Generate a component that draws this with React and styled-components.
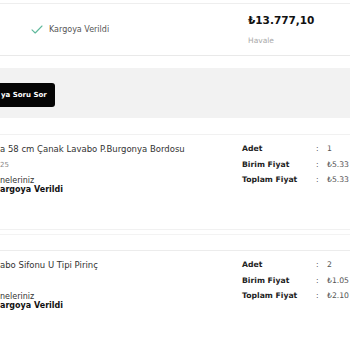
import React from 'react';
import styled, { createGlobalStyle } from 'styled-components';

const GlobalStyle = createGlobalStyle`
  html, body {
    margin: 0;
    padding: 0;
    background: #ffffff;
  }
  body {
    font-family: "DejaVu Sans", "Noto Sans", sans-serif;
    color: #222;
  }
`;

const Page = styled.div`
  width: 350px;
  height: 350px;
  overflow: hidden;
  background: #fff;
`;

const Summary = styled.div`
  margin-top: 3px;
  height: 51px;
  border-top: 1px solid #eeeeee;
  border-bottom: 1px solid #e9e9e9;
  display: grid;
  grid-template-columns: 248px 1fr;
  align-items: center;
`;

const Status = styled.div`
  display: flex;
  align-items: center;
  gap: 6px;
  padding-left: 31px;
  font-size: 8px;
  color: #555;
`;

const PriceBox = styled.div`
  display: flex;
  flex-direction: column;
  gap: 11px;
`;

const Price = styled.div`
  font-size: 10.5px;
  font-weight: 700;
  color: #111;
  line-height: 12px;
`;

const Method = styled.div`
  font-size: 7.5px;
  color: #aaa;
  line-height: 8px;
`;

const ActionBar = styled.div`
  margin-top: 12px;
  height: 50px;
  background: #f2f2f2;
  display: flex;
  align-items: center;
`;

const AskButton = styled.button`
  height: 24px;
  padding: 0 8px 0 1px;
  border: none;
  border-radius: 0 3px 3px 0;
  background: #050505;
  color: #fff;
  font-family: inherit;
  font-size: 7px;
  font-weight: 600;
  margin-top: 3px;
`;

const Item = styled.div`
  border-top: 1px solid ${p => (p.strong ? '#ececec' : '#f1f1f1')};
  margin-top: ${p => p.gap}px;
  padding: 10px 0 ${p => p.bottom}px;
  display: grid;
  grid-template-columns: 242px 1fr;
  align-items: start;
  border-bottom: ${p => (p.last ? 'none' : '1px solid #f1f1f1')};
`;

const Left = styled.div`
  display: flex;
  flex-direction: column;
`;

const Name = styled.div`
  font-size: 8.5px;
  line-height: 8px;
  color: #333;
  white-space: nowrap;
`;

const Code = styled.div`
  margin-top: 8px;
  min-height: 8px;
  font-size: 7px;
  line-height: 8px;
  color: #888;
`;

const Label = styled.div`
  margin-top: 8px;
  font-size: 8px;
  line-height: 8px;
  color: #333;
`;

const StatusText = styled.div`
  margin-top: 1px;
  font-size: 8px;
  line-height: 8px;
  font-weight: 700;
  color: #111;
`;

const Table = styled.div`
  display: grid;
  grid-template-columns: 74px 11px 1fr;
  align-content: start;
  row-gap: 7.5px;
  font-size: 7.7px;
  line-height: 8px;
  white-space: nowrap;
`;

const Key = styled.div`
  font-weight: 600;
  color: #222;
`;

const Colon = styled.div`
  color: #555;
`;

const Value = styled.div`
  color: #555;
`;

const Divider = styled.div`
  margin-top: 4px;
  height: 0;
  border-top: 1px solid #f3f3f3;
`;

const Check = () => (
  <svg width="12" height="9" viewBox="0 0 12 9" fill="none">
    <path d="M1 4.8 L4.2 8 L11 1" stroke="#5fb99c" strokeWidth="1.1" strokeLinecap="round" strokeLinejoin="round" />
  </svg>
);

const items = [
  {
    name: 'a 58 cm Çanak Lavabo P.Burgonya Bordosu',
    code: '25',
    rows: [['Adet', '1'], ['Birim Fiyat', '₺5.33'], ['Toplam Fiyat', '₺5.33']],
  },
  {
    name: 'abo Sifonu U Tipi Pirinç',
    code: '',
    rows: [['Adet', '2'], ['Birim Fiyat', '₺1.05'], ['Toplam Fiyat', '₺2.10']],
  },
];

const OrderItem = ({ item, ...rest }) => (
  <Item {...rest}>
    <Left>
      <Name>{item.name}</Name>
      <Code>{item.code}</Code>
      <Label>neleriniz</Label>
      <StatusText>argoya Verildi</StatusText>
    </Left>
    <Table>
      {item.rows.map(([k, v]) => (
        <React.Fragment key={k}>
          <Key>{k}</Key>
          <Colon>:</Colon>
          <Value>{v}</Value>
        </React.Fragment>
      ))}
    </Table>
  </Item>
);

export default function App() {
  return (
    <>
      <GlobalStyle />
      <Page>
        <Summary>
          <Status>
            <Check />
            <span>Kargoya Verildi</span>
          </Status>
          <PriceBox>
            <Price>₺13.777,10</Price>
            <Method>Havale</Method>
          </PriceBox>
        </Summary>
        <ActionBar>
          <AskButton>ya Soru Sor</AskButton>
        </ActionBar>
        <OrderItem item={items[0]} gap={16} bottom={35} />
        <Divider />
        <OrderItem item={items[1]} gap={15} bottom={20} strong last />
      </Page>
    </>
  );
}
